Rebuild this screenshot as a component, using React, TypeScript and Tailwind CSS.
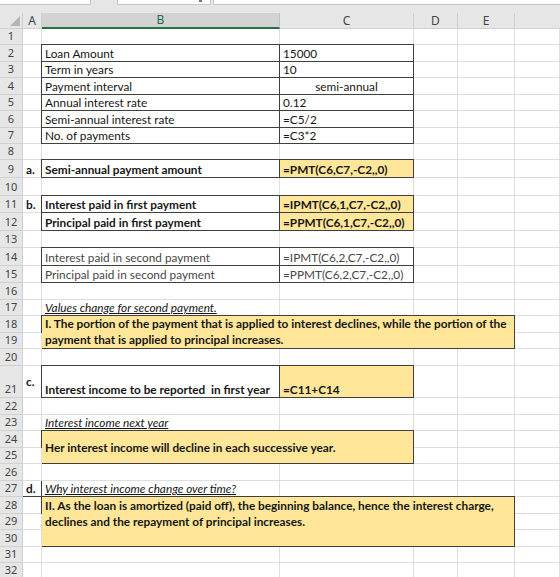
import React from "react";

const F = "font-['Lato','Liberation_Sans',sans-serif]";

type Al = "end" | "center" | "start";
const AL: Record<Al, string> = {
  end: "items-end",
  center: "items-center",
  start: "items-start",
};

function RH({ n }: { n: number | string }) {
  return (
    <div className="bg-[#e6e6e6] border-r border-b border-[#d0d0d0] flex items-end justify-center pb-[1px] text-[11px] leading-[14px] text-[#444] font-['Noto_Sans','Liberation_Sans',sans-serif]">
      {n}
    </div>
  );
}

function P({ children, className = "", al = "end" }: { children?: React.ReactNode; className?: string; al?: Al }) {
  return (
    <div className={"border-r border-b border-[#dedede] flex px-[3px] text-[11.8px] leading-[15px] text-[#161616] whitespace-nowrap " + AL[al] + " " + className}>
      {children}
    </div>
  );
}

function Bx({ children, className = "", al = "end" }: { children?: React.ReactNode; className?: string; al?: Al }) {
  return (
    <div className={"-mt-px -ml-px border border-[#3f3f3f] flex px-[3px] text-[11.8px] leading-[15px] text-[#161616] whitespace-nowrap " + AL[al] + " " + className}>
      {children}
    </div>
  );
}

function Empty({ n }: { n: number }) {
  return (
    <>
      <RH n={n} />
      <P />
      <P />
      <P />
      <P />
      <P />
      <P />
    </>
  );
}

function Tail() {
  return (
    <>
      <P />
      <P />
      <P />
    </>
  );
}

function Pair({ n, label, value, center = false }: { n: number; label: string; value: string; center?: boolean }) {
  return (
    <>
      <RH n={n} />
      <P />
      <Bx>{label}</Bx>
      <Bx className={center ? "justify-center" : ""}>{value}</Bx>
      <Tail />
    </>
  );
}

export default function App() {
  return (
    <div className={"w-[560px] h-[577px] overflow-hidden bg-white " + F}>
      <div className="flex h-[13px] bg-[#e6e6e6] items-start">
        <div className="w-[91px] h-[5px] bg-white border-r border-b border-[#c6c6c6]" />
        <div className="ml-[26px] w-[94px] h-[5px] bg-white border-l border-r border-b border-[#c6c6c6] flex justify-end pr-[8px]">
          <div className="w-[3px] h-[2px] bg-[#777]" />
        </div>
        <div className="ml-[2px] flex-1 h-[5px] bg-white border-l border-b border-[#c6c6c6]" />
      </div>
      <div className="grid grid-cols-[23px_19px_238px_134px_44px_57px_1fr] grid-rows-[16px_16px_17px_16px_17px_16px_17px_16px_16px_18px_18px_17px_18px_17px_18px_17px_17px_16px_17px_16px_17px_32px_17px_16px_17px_16px_17px_16px_17px_16px_17px_16px_16px]">
        {/* header row */}
        <div className="bg-[#e6e6e6] border-r border-b border-[#d0d0d0] flex items-end justify-end p-[2px]">
          <svg width="10" height="10" viewBox="0 0 10 10">
            <polygon points="10,0 10,10 0,10" fill="#b5b5b5" />
          </svg>
        </div>
        <div className="bg-[#e6e6e6] border-r border-b border-[#d0d0d0] flex items-center justify-center text-[12px] text-[#444] font-['Noto_Sans',sans-serif]">A</div>
        <div className="bg-[#d3d3d3] border-r border-[#c0c0c0] border-b-2 border-b-[#217346] flex items-center justify-center text-[12px] text-[#1f6b43] font-['Noto_Sans',sans-serif]">B</div>
        <div className="bg-[#e6e6e6] border-r border-b border-[#d0d0d0] flex items-center justify-center text-[12px] text-[#444] font-['Noto_Sans',sans-serif]">C</div>
        <div className="bg-[#e6e6e6] border-r border-b border-[#d0d0d0] flex items-center justify-center text-[12px] text-[#444] font-['Noto_Sans',sans-serif]">D</div>
        <div className="bg-[#e6e6e6] border-r border-b border-[#d0d0d0] flex items-center justify-center text-[12px] text-[#444] font-['Noto_Sans',sans-serif]">E</div>
        <div className="bg-[#e6e6e6] border-b border-[#d0d0d0]" />

        <Empty n={1} />
        <Pair n={2} label="Loan Amount" value="15000" />
        <Pair n={3} label="Term in years" value="10" />
        <Pair n={4} label="Payment interval" value="semi-annual" center />
        <Pair n={5} label="Annual interest rate" value="0.12" />
        <Pair n={6} label="Semi-annual interest rate" value="=C5/2" />
        <Pair n={7} label="No. of payments" value="=C3*2" />
        <Empty n={8} />

        <RH n={9} />
        <P className="font-bold px-[2px]">a.</P>
        <Bx className="font-bold">Semi-annual payment amount</Bx>
        <Bx className="font-bold bg-[#ffe699]">=PMT(C6,C7,-C2,,0)</Bx>
        <Tail />

        <Empty n={10} />

        <RH n={11} />
        <P className="font-bold px-[2px]">b.</P>
        <Bx className="font-bold">Interest paid in first payment</Bx>
        <Bx className="font-bold bg-[#ffe699]">=IPMT(C6,1,C7,-C2,,0)</Bx>
        <Tail />

        <RH n={12} />
        <P />
        <Bx className="font-bold">Principal paid in first payment</Bx>
        <Bx className="font-bold bg-[#ffe699]">=PPMT(C6,1,C7,-C2,,0)</Bx>
        <Tail />

        <Empty n={13} />

        <RH n={14} />
        <P />
        <Bx className="text-[#474747]">Interest paid in second payment</Bx>
        <Bx className="text-[#474747]">=IPMT(C6,2,C7,-C2,,0)</Bx>
        <Tail />

        <RH n={15} />
        <P />
        <Bx className="text-[#474747]">Principal paid in second payment</Bx>
        <Bx className="text-[#474747]">=PPMT(C6,2,C7,-C2,,0)</Bx>
        <Tail />

        <Empty n={16} />

        <RH n={17} />
        <P />
        <P className="italic underline text-[#3a3a3a]">Values change for second payment.</P>
        <P />
        <Tail />

        <RH n={18} />
        <P />
        <Bx al="center" className="col-span-4 row-span-2 bg-[#ffe699] font-bold leading-[16px]">
          <span>
            I. The portion of the payment that is applied to interest declines, while the portion of the
            <br />
            payment that is applied to principal increases.
          </span>
        </Bx>
        <P />

        <RH n={19} />
        <P />
        <P />

        <Empty n={20} />

        <RH n={21} />
        <P al="center" className="font-bold text-[10.5px]">c.</P>
        <Bx className="font-bold">Interest income to be reported&nbsp; in first year</Bx>
        <Bx className="font-bold bg-[#ffe699]">=C11+C14</Bx>
        <Tail />

        <Empty n={22} />

        <RH n={23} />
        <P />
        <P className="italic underline text-[#3a3a3a]">Interest income next year</P>
        <P />
        <Tail />

        <RH n={24} />
        <P />
        <Bx al="center" className="col-span-2 row-span-2 bg-[#ffe699] font-bold">
          Her interest income will decline in each successive year.
        </Bx>
        <Tail />

        <RH n={25} />
        <P />
        <Tail />

        <Empty n={26} />

        <RH n={27} />
        <P className="font-bold px-[2px] border-r-[#3f3f3f] border-b-[#3f3f3f]">d.</P>
        <P className="italic underline text-[#3a3a3a]">Why interest income change over time?</P>
        <P />
        <Tail />

        <RH n={28} />
        <P />
        <Bx al="start" className="col-span-4 row-span-3 bg-[#ffe699] font-bold leading-[16px] pt-[1px]">
          <span>
            II. As the loan is amortized (paid off), the beginning balance, hence the interest charge,
            <br />
            declines and the repayment of principal increases.
          </span>
        </Bx>
        <P />

        <RH n={29} />
        <P />
        <P />

        <RH n={30} />
        <P />
        <P />

        <Empty n={31} />
        <Empty n={32} />
      </div>
    </div>
  );
}
